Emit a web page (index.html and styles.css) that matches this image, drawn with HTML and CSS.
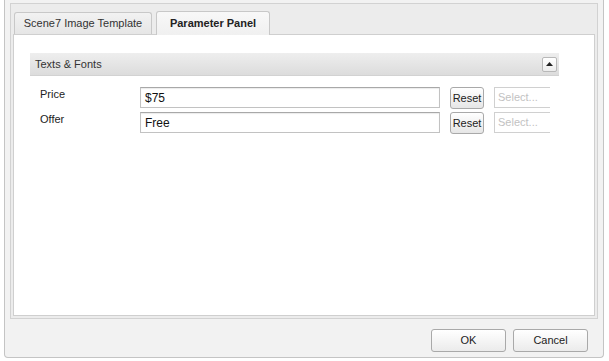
FILE: index.html
```html
<!DOCTYPE html>
<html>
<head>
<meta charset="utf-8">
<link rel="stylesheet" href="styles.css">
</head>
<body>
<div class="dialog">
  <div class="frame">
    <div class="tabs">
      <div class="tab">Scene7 Image Template</div>
      <div class="tab active">Parameter Panel</div>
    </div>
    <div class="panel">
      <div class="section">
        <div class="section-head">
          <span class="section-title">Texts &amp; Fonts</span>
          <span class="collapse"><svg width="7" height="4" viewBox="0 0 7 4"><path d="M0 4 L3.5 0 L7 4 Z" fill="#222"/></svg></span>
        </div>
        <div class="rows">
          <div class="row">
            <span class="label">Price</span>
            <span class="input">$75</span>
            <span class="reset">Reset</span>
            <span class="select">Select...</span>
          </div>
          <div class="row">
            <span class="label">Offer</span>
            <span class="input">Free</span>
            <span class="reset">Reset</span>
            <span class="select">Select...</span>
          </div>
        </div>
      </div>
    </div>
  </div>
  <div class="footer">
    <span class="btn">OK</span>
    <span class="btn">Cancel</span>
  </div>
</div>
</body>
</html>
```

FILE: styles.css
```css
html, body {
  margin: 0;
  padding: 0;
  background: #ffffff;
}
body {
  font-family: "Liberation Sans", Arial, sans-serif;
  font-size: 11px;
  color: #222;
}
.dialog {
  box-sizing: border-box;
  margin-left: 4px;
  width: 600px;
  height: 358px;
  background: #f2f2f2;
  border: 1px solid #c4c4c4;
  border-top: none;
  border-radius: 0 0 4px 4px;
  padding: 3px 5px 0 5px;
  display: flex;
  flex-direction: column;
}
.frame {
  box-sizing: border-box;
  height: 316px;
  border: 1px solid #d2d2d2;
  background: #ececec;
  padding: 0 2px 2px 2px;
  display: flex;
  flex-direction: column;
}
.tabs {
  display: flex;
  align-items: flex-end;
  height: 30px;
  padding-left: 1px;
  gap: 4px;
}
.tab {
  box-sizing: border-box;
  height: 22px;
  padding: 0;
  white-space: nowrap;
  text-align: center;
  line-height: 21px;
  border: 1px solid #c8c8c8;
  border-bottom: none;
  border-radius: 3px 3px 0 0;
  background: linear-gradient(#f2f2f2, #e6e6e6);
  color: #333;
}
.tab:first-child {
  width: 138px;
}
.tab.active {
  height: 24px;
  width: 114px;
  line-height: 22px;
  font-weight: bold;
  color: #222;
  background: linear-gradient(#f8f8f8, #f0f0f0);
  margin-bottom: -1px;
  position: relative;
  z-index: 1;
}
.panel {
  flex: 1;
  background: #ffffff;
  border: 1px solid #cfcfcf;
  padding: 18px 35px 0 16px;
}
.section-head {
  box-sizing: border-box;
  height: 23px;
  background: linear-gradient(#eeeeee, #dcdcdc);
  border-bottom: 1px solid #d2d2d2;
  display: flex;
  align-items: center;
  justify-content: space-between;
  padding: 0 2px 0 5px;
}
.section-title {
  color: #333;
}
.collapse {
  box-sizing: border-box;
  width: 15px;
  height: 15px;
  border: 1px solid #b8b8b8;
  border-radius: 2px;
  background: linear-gradient(#ffffff, #ececec);
  display: flex;
  align-items: center;
  justify-content: center;
}
.rows {
  padding: 11px 0 0 10px;
  display: flex;
  flex-direction: column;
  gap: 3px;
}
.row {
  display: flex;
  align-items: flex-start;
  height: 22px;
}
.label {
  width: 100px;
  line-height: 14px;
  color: #222;
}
.input {
  box-sizing: border-box;
  width: 300px;
  height: 21px;
  border: 1px solid #c2c2c2;
  border-top-color: #a8a8a8;
  box-shadow: inset 0 1px 1px rgba(0,0,0,0.08);
  padding-left: 4px;
  line-height: 20px;
  font-size: 12px;
  color: #111;
}
.reset {
  box-sizing: border-box;
  margin-left: 10px;
  width: 34px;
  height: 22px;
  border: 1px solid #a9a9a9;
  border-radius: 3px;
  background: linear-gradient(#ffffff, #e6e6e6);
  text-align: center;
  line-height: 20px;
  color: #222;
}
.select {
  box-sizing: border-box;
  margin-left: 10px;
  width: 56px;
  height: 21px;
  border: 1px solid #d0d0d0;
  border-right: none;
  padding-left: 3px;
  line-height: 19px;
  color: #c2c2c2;
  background: #ffffff;
}
.footer {
  flex: 1;
  display: flex;
  justify-content: flex-end;
  align-items: flex-start;
  padding: 10px 10px 0 0;
  gap: 7px;
}
.btn {
  box-sizing: border-box;
  width: 75px;
  height: 23px;
  border: 1px solid #a9a9a9;
  border-radius: 3px;
  background: linear-gradient(#ffffff, #ebebeb);
  text-align: center;
  line-height: 21px;
  color: #222;
}
```
